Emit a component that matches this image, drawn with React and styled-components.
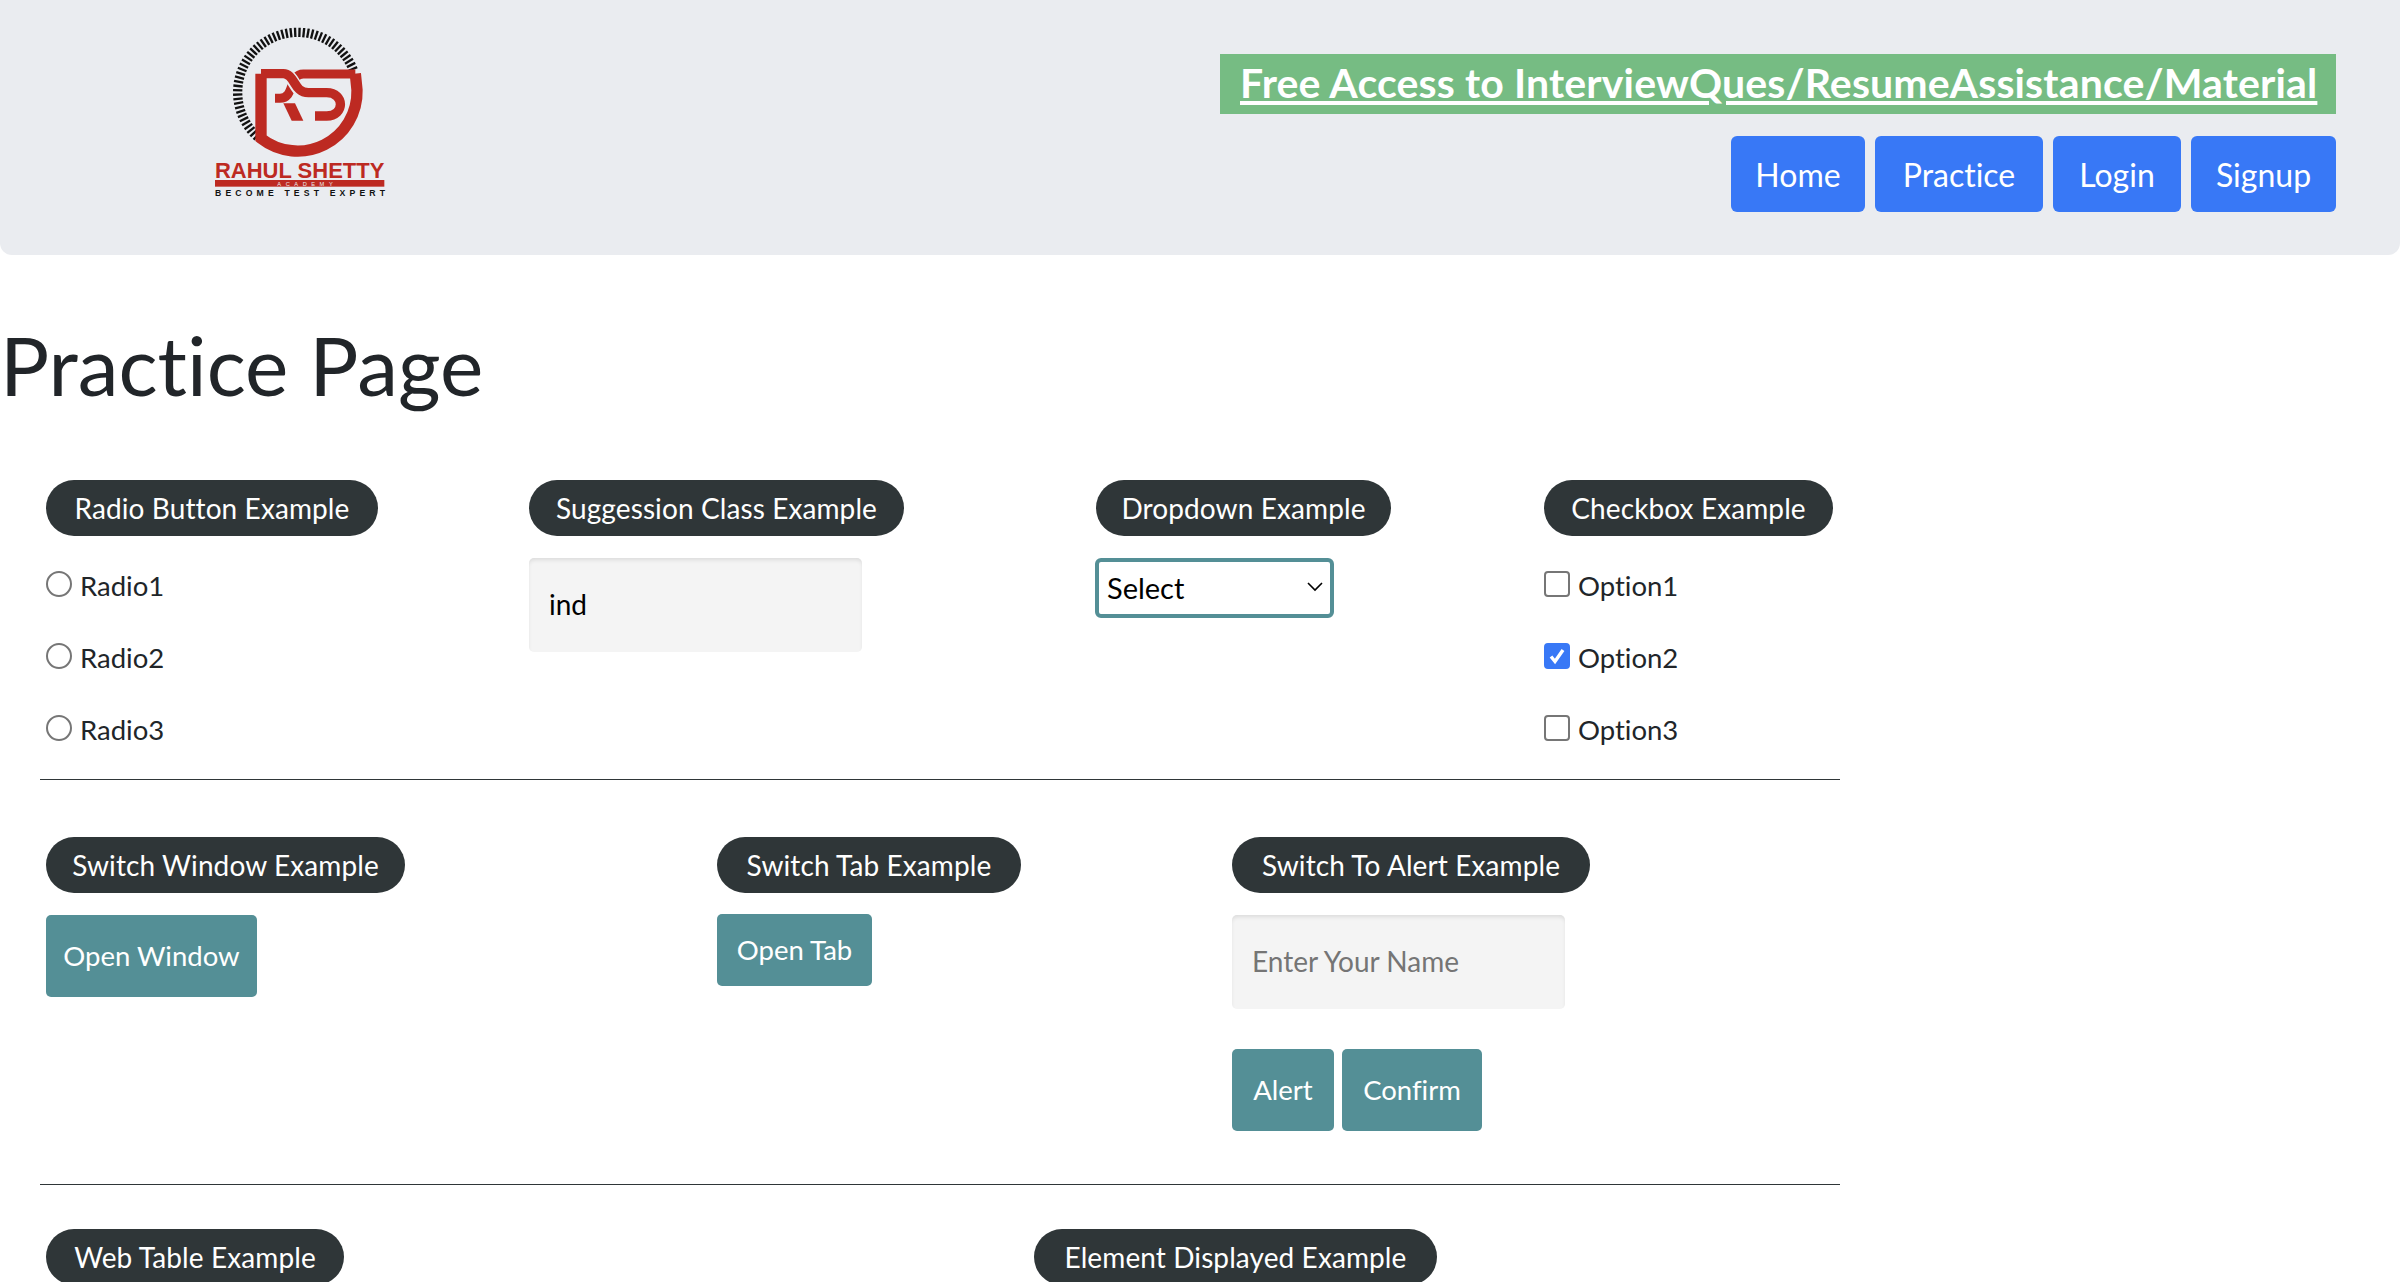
import React from 'react';
import styled, { createGlobalStyle } from 'styled-components';

const FONT = '"Lato", "Noto Sans", "DejaVu Sans", sans-serif';

const GlobalStyle = createGlobalStyle`
  html, body {
    margin: 0;
    padding: 0;
    height: 100%;
    overflow: hidden;
    background: #fff;
  }
  body {
    font-family: ${FONT};
    font-variant-ligatures: none;
    color: #212529;
  }
`;

const Header = styled.header`
  height: 255px;
  background: #eaecf0;
  border-radius: 0 0 12px 12px;
  display: flex;
  justify-content: space-between;
  padding: 0 64px 0 180px;
  box-sizing: border-box;
`;

const LogoSvg = styled.svg`
  margin-top: 10px;
`;

const HeaderRight = styled.div`
  display: flex;
  flex-direction: column;
  align-items: flex-end;
  padding-top: 54px;
  gap: 22px;
`;

const Promo = styled.a`
  display: block;
  height: 60px;
  line-height: 58px;
  width: 1116px;
  box-sizing: border-box;
  padding: 0 20px;
  background: #76bc83;
  color: #fff;
  font-size: 41px;
  font-weight: 700;
  letter-spacing: 0.15px;
  text-decoration: underline;
  white-space: nowrap;
`;

const Nav = styled.nav`
  display: flex;
  gap: 10px;
`;

const NavLink = styled.a`
  height: 76px;
  width: ${(p) => p.$w}px;
  display: flex;
  align-items: center;
  justify-content: center;
  background: #3878f6;
  color: #fff;
  border-radius: 6px;
  font-size: 32px;
`;

const Title = styled.h1`
  margin: 0;
  padding-top: 61px;
  height: 140px;
  box-sizing: border-box;
  font-size: 82px;
  font-weight: 400;
  line-height: 96px;
  color: #212529;
`;

const Main = styled.main`
  width: 1800px;
  margin-left: 40px;
`;

const Row = styled.section`
  display: grid;
  grid-template-columns: ${(p) => p.$cols};
  padding: ${(p) => p.$top}px 6px 0;
  height: ${(p) => p.$h}px;
  box-sizing: border-box;
`;

const Divider = styled.hr`
  margin: 0;
  border: 0;
  border-top: 1px solid #2f3638;
`;

const Legend = styled.div`
  display: inline-flex;
  align-items: center;
  justify-content: center;
  flex-shrink: 0;
  height: 56px;
  width: ${(p) => p.$w}px;
  box-sizing: border-box;
  padding-bottom: 1px;
  background: #2f3638;
  color: #fff;
  border-radius: 28px;
  font-size: 28px;
  letter-spacing: 0.1px;
  white-space: nowrap;
`;

const Group = styled.div`
  display: flex;
  flex-direction: column;
  align-items: flex-start;
  gap: ${(p) => p.$gap || 22}px;
`;

const OptionList = styled.div`
  display: flex;
  flex-direction: column;
  gap: 36px;
  padding-top: 9px;
`;

const Option = styled.label`
  display: flex;
  align-items: center;
  gap: 8px;
  height: 36px;
  font-size: 27.5px;
  color: #212529;
`;

const Radio = styled.span`
  width: 26px;
  height: 26px;
  box-sizing: border-box;
  border: 2px solid #767676;
  border-radius: 50%;
  margin-top: -3px;
`;

const Check = styled.span`
  width: 26px;
  height: 26px;
  box-sizing: border-box;
  border: 2px solid ${(p) => (p.$on ? '#3878f6' : '#767676')};
  background: ${(p) => (p.$on ? '#3878f6' : '#fff')};
  border-radius: 4px;
  margin-top: -3px;
  display: flex;
  align-items: center;
  justify-content: center;
`;

const TextBox = styled.div`
  width: 333px;
  height: 94px;
  box-sizing: border-box;
  padding: 0 20px 2px;
  display: flex;
  align-items: center;
  background: #f4f4f4;
  border-radius: 5px;
  box-shadow: inset 0 3px 4px -1px rgba(0, 0, 0, 0.1);
  font-size: 28px;
  color: ${(p) => (p.$placeholder ? '#757575' : '#000')};
`;

const SelectBox = styled.div`
  width: 239px;
  height: 60px;
  margin-left: -1px;
  box-sizing: border-box;
  border: 4px solid #548f96;
  border-radius: 6px;
  background: #fff;
  padding: 0 7px 2px 8px;
  display: flex;
  align-items: center;
  justify-content: space-between;
  font-size: 29px;
  color: #000;
`;

const ActionButton = styled.button`
  height: ${(p) => p.$h}px;
  width: ${(p) => p.$w}px;
  padding: 0 0 2px;
  border: 0;
  border-radius: 5px;
  background: #548f96;
  color: #fff;
  font-family: ${FONT};
  font-variant-ligatures: none;
  font-size: 27.5px;
`;

const ButtonRow = styled.div`
  display: flex;
  gap: 8px;
  margin-top: 18px;
`;

const Logo = () => (
  <LogoSvg width="240" height="200" viewBox="0 0 720 600">
    <g stroke="#111" strokeWidth="7">
      {Array.from({ length: 51 }, (_, i) => {
        const a = (-23 - i * 4.08) * (Math.PI / 180);
        const c = Math.cos(a);
        const s = Math.sin(a);
        return <line key={i} x1={353 + 166 * c} y1={247 + 166 * s} x2={353 + 194 * c} y2={247 + 194 * s} />;
      })}
    </g>
    <g fill="none" stroke="#bd2a22">
      <path strokeWidth="34" d="M243 191V385A178 178 0 0 0 531 240L526 191" />
      <path strokeWidth="27" d="M526 192H370C325 192 345 265 300 265H285" />
      <path strokeWidth="38" stroke="#eaecf0" d="M322 195C342 205 345 240 372 248" />
      <path strokeWidth="28" d="M243 191H310C345 191 340 248 385 248H440C495 248 495 318 440 318H405" />
    </g>
    <polygon fill="#bd2a22" points="310,280 345,280 370,332 335,332" />
    <text x="105" y="503" fill="#bd2a22" fontFamily="Liberation Sans" fontSize="66" fontWeight="700" textLength="508" lengthAdjust="spacingAndGlyphs">RAHUL SHETTY</text>
    <rect x="105" y="510" width="508" height="20" fill="#bd2a22" />
    <text x="292" y="527" fill="#eaecf0" fontFamily="Liberation Sans" fontSize="17" textLength="166">ACADEMY</text>
    <text x="105" y="557" fill="#111" fontFamily="Liberation Sans" fontSize="26" fontWeight="700" textLength="510">BECOME TEST EXPERT</text>
  </LogoSvg>
);

const App = () => (
  <>
    <GlobalStyle />
    <Header>
      <Logo />
      <HeaderRight>
        <Promo>Free Access to InterviewQues/ResumeAssistance/Material</Promo>
        <Nav>
          <NavLink $w={134}>Home</NavLink>
          <NavLink $w={168}>Practice</NavLink>
          <NavLink $w={128}>Login</NavLink>
          <NavLink $w={145}>Signup</NavLink>
        </Nav>
      </HeaderRight>
    </Header>
    <Title>Practice Page</Title>
    <Main>
      <Row $cols="483px 567px 448px 1fr" $h={384} $top={85}>
        <Group>
          <Legend $w={332}>Radio Button Example</Legend>
          <OptionList>
            <Option><Radio />Radio1</Option>
            <Option><Radio />Radio2</Option>
            <Option><Radio />Radio3</Option>
          </OptionList>
        </Group>
        <Group>
          <Legend $w={375}>Suggession Class Example</Legend>
          <TextBox>ind</TextBox>
        </Group>
        <Group>
          <Legend $w={295}>Dropdown Example</Legend>
          <SelectBox>
            Select
            <svg width="16" height="10" viewBox="0 0 16 10" fill="none" stroke="#000" strokeWidth="1.6">
              <path d="M1 1l7 7 7-7" />
            </svg>
          </SelectBox>
        </Group>
        <Group>
          <Legend $w={289}>Checkbox Example</Legend>
          <OptionList>
            <Option><Check />Option1</Option>
            <Option>
              <Check $on>
                <svg width="18" height="18" viewBox="0 0 18 18" fill="none" stroke="#fff" strokeWidth="3.4">
                  <path d="M3 9.5l4 5L15 3" />
                </svg>
              </Check>
              Option2
            </Option>
            <Option><Check />Option3</Option>
          </OptionList>
        </Group>
      </Row>
      <Divider />
      <Row $cols="671px 515px 1fr" $h={404} $top={57}>
        <Group>
          <Legend $w={359}>Switch Window Example</Legend>
          <ActionButton $w={211} $h={82}>Open Window</ActionButton>
        </Group>
        <Group $gap={21}>
          <Legend $w={304}>Switch Tab Example</Legend>
          <ActionButton $w={155} $h={72}>Open Tab</ActionButton>
        </Group>
        <Group>
          <Legend $w={358}>Switch To Alert Example</Legend>
          <TextBox $placeholder>Enter Your Name</TextBox>
          <ButtonRow>
            <ActionButton $w={102} $h={82}>Alert</ActionButton>
            <ActionButton $w={140} $h={82}>Confirm</ActionButton>
          </ButtonRow>
        </Group>
      </Row>
      <Divider />
      <Row $cols="988px 1fr" $h={200} $top={44}>
        <Group>
          <Legend $w={298}>Web Table Example</Legend>
        </Group>
        <Group>
          <Legend $w={403}>Element Displayed Example</Legend>
        </Group>
      </Row>
    </Main>
  </>
);

export default App;
